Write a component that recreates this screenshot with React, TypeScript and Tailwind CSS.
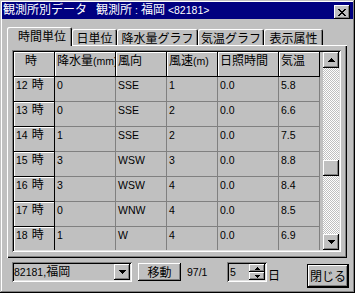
import React from "react";

const CJK_RE = /([\u3000-\u30ff\u3400-\u9fff\uff00-\uffef]+)/;

function T({ s }: { s: string }) {
  const parts = s.split(CJK_RE);
  return (
    <>
      {parts.map((p, i) =>
        i % 2 === 1 ? (
          <span key={i} className="font-['Noto_Sans_CJK_JP',sans-serif] text-[12px] leading-[10px]">
            {p}
          </span>
        ) : (
          <React.Fragment key={i}>{p}</React.Fragment>
        )
      )}
    </>
  );
}

const raised =
  "shadow-[inset_-1px_-1px_#000,inset_1px_1px_#fff,inset_-2px_-2px_#808080]";
const sunken =
  "shadow-[inset_1px_1px_#808080,inset_-1px_-1px_#fff,inset_2px_2px_#000,inset_-2px_-2px_#dfdfdf]";

function ArrowUp() {
  return (
    <svg width="7" height="4" viewBox="0 0 7 4" shapeRendering="crispEdges">
      <path d="M3 0h1v1H3zM2 1h3v1H2zM1 2h5v1H1zM0 3h7v1H0z" fill="#000" />
    </svg>
  );
}
function ArrowDown() {
  return (
    <svg width="7" height="4" viewBox="0 0 7 4" shapeRendering="crispEdges">
      <path d="M0 0h7v1H0zM1 1h5v1H1zM2 2h3v1H2zM3 3h1v1H3z" fill="#000" />
    </svg>
  );
}
function SmallUp() {
  return (
    <svg width="5" height="3" viewBox="0 0 5 3" shapeRendering="crispEdges">
      <path d="M2 0h1v1H2zM1 1h3v1H1zM0 2h5v1H0z" fill="#000" />
    </svg>
  );
}
function SmallDown() {
  return (
    <svg width="5" height="3" viewBox="0 0 5 3" shapeRendering="crispEdges">
      <path d="M0 0h5v1H0zM1 1h3v1H1zM2 2h1v1H2z" fill="#000" />
    </svg>
  );
}
function CloseX() {
  return (
    <svg width="8" height="7" viewBox="0 0 8 7" shapeRendering="crispEdges">
      <path
        d="M0 0h2v1H0zM6 0h2v1H6zM1 1h2v1H1zM5 1h2v1H5zM2 2h4v1H2zM3 3h2v1H3zM2 4h4v1H2zM1 5h2v1H1zM5 5h2v1H5zM0 6h2v1H0zM6 6h2v1H6z"
        fill="#000"
      />
    </svg>
  );
}

const colW = ["w-[41px]", "w-[61px]", "w-[51px]", "w-[51px]", "w-[61px]", "w-[41px]"];

const headers = ["時", "降水量(mm)", "風向", "風速(m)", "日照時間", "気温"];

const rows: string[][] = [
  ["12", "0", "SSE", "1", "0.0", "5.8"],
  ["13", "0", "SSE", "2", "0.0", "6.6"],
  ["14", "1", "SSE", "2", "0.0", "7.5"],
  ["15", "3", "WSW", "3", "0.0", "8.8"],
  ["16", "3", "WSW", "4", "0.0", "8.4"],
  ["17", "0", "WNW", "4", "0.0", "8.5"],
  ["18", "1", "W", "4", "0.0", "6.9"],
];

const tabs = [
  { label: "日単位", w: "w-[45px]" },
  { label: "降水量グラフ", w: "w-[81px]" },
  { label: "気温グラフ", w: "w-[66px]" },
  { label: "表示属性", w: "w-[59px]" },
];

export default function App() {
  return (
    <div className="w-[355px] h-[293px] bg-[#c0c0c0] p-[2px] flex flex-col overflow-hidden text-black font-['Liberation_Sans','Noto_Sans_CJK_JP',sans-serif] text-[10.5px] leading-[14px] shadow-[inset_-1px_-1px_#000,inset_1px_1px_#c0c0c0,inset_-2px_-2px_#808080,inset_2px_2px_#fff]">
      {/* Title bar */}
      <div className="h-[17px] shrink-0 bg-[#000080] flex items-start pl-[1px] text-white leading-[17px]">
        <span className="whitespace-nowrap">
          <T s="観測所別データ" />
          <span className="inline-block w-[9px]" />
          <T s="観測所" />
          <span className="mx-[3px]">:</span>
          <T s="福岡" /> &lt;82181&gt;
        </span>
        <div className={`ml-auto mr-[3px] mt-[3px] w-[16px] h-[14px] bg-[#c0c0c0] flex items-center justify-center ${raised}`}>
          <CloseX />
        </div>
      </div>

      {/* Tabs */}
      <div className="mt-[8px] h-[18px] shrink-0 flex items-end pl-[5px]">
        <div className="relative z-10 w-[65px] h-[19px] -mb-[1px] bg-[#c0c0c0] rounded-tl-[2px] rounded-tr-[2px] pt-[3px] pl-[11px] whitespace-nowrap shadow-[inset_1px_1px_#fff,inset_-1px_0_#000,inset_-2px_0_#808080]">
          <T s="時間単位" />
        </div>
        {tabs.map((t) => (
          <div
            key={t.label}
            className={`${t.w} h-[16px] bg-[#c0c0c0] rounded-tl-[2px] rounded-tr-[2px] pt-[3px] text-center whitespace-nowrap shadow-[inset_1px_1px_#fff,inset_-1px_0_#000,inset_-2px_0_#808080]`}
          >
            <T s={t.label} />
          </div>
        ))}
      </div>

      {/* Panel */}
      <div className="ml-[5px] w-[340px] h-[213px] shrink-0 pt-[5px] pl-[5px] shadow-[inset_1px_1px_#fff,inset_-1px_-1px_#000,inset_-2px_-2px_#808080]">
        <div className={`w-[329px] h-[202px] p-[2px] flex overflow-hidden ${sunken}`}>
          {/* Grid */}
          <div className="w-[306px] h-full flex flex-col overflow-hidden">
            <div className="h-[25px] shrink-0 flex">
              {headers.map((h, ci) => (
                <div
                  key={h}
                  className={`${colW[ci]} shrink-0 h-full border-r border-b border-black shadow-[inset_1px_1px_#fff] pt-[2px] overflow-hidden whitespace-nowrap ${
                    ci === 0 ? "pl-[11px]" : "pl-[2px]"
                  }`}
                >
                  <T s={h} />
                </div>
              ))}
            </div>
            {rows.map((r) => (
              <div key={r[0]} className="h-[25px] shrink-0 flex">
                {r.map((c, ci) =>
                  ci === 0 ? (
                    <div
                      key={ci}
                      className="w-[41px] shrink-0 h-full border-r border-b border-black shadow-[inset_1px_1px_#fff] pt-[1px] pl-[2px] whitespace-nowrap"
                    >
                      {c}
                      <span className="inline-block w-[4px]" />
                      <T s="時" />
                    </div>
                  ) : (
                    <div
                      key={ci}
                      className={`${colW[ci]} shrink-0 h-full border-r border-b border-[#808080] pt-[1px] pl-[2px] overflow-hidden whitespace-nowrap`}
                    >
                      {c}
                    </div>
                  )
                )}
              </div>
            ))}
          </div>
          {/* Scrollbar */}
          <div className="ml-[3px] w-[16px] h-full flex flex-col">
            <div className={`h-[16px] shrink-0 flex items-center justify-center ${raised}`}>
              <ArrowUp />
            </div>
            <div className="flex-1 flex flex-col [background:repeating-conic-gradient(#c0c0c0_0_25%,#fff_0_50%)_0_0/2px_2px]">
              <div className={`mt-[92px] h-[16px] bg-[#c0c0c0] ${raised}`} />
            </div>
            <div className={`h-[16px] shrink-0 flex items-center justify-center ${raised}`}>
              <ArrowDown />
            </div>
          </div>
        </div>
      </div>

      {/* Bottom controls */}
      <div className="mt-[4px] flex items-start pl-[10px]">
        <div className={`w-[120px] h-[20px] p-[2px] flex ${sunken}`}>
          <div className="flex-1 pt-[1px] whitespace-nowrap">
            <T s="82181,福岡" />
          </div>
          <div className={`w-[16px] h-[16px] flex items-center justify-center ${raised}`}>
            <ArrowDown />
          </div>
        </div>
        <div className={`ml-[6px] mt-[1px] w-[43px] h-[18px] flex items-center justify-center ${raised}`}>
          <T s="移動" />
        </div>
        <div className="ml-[6px] w-[40px] pt-[3px]">97/1</div>
        <div className={`w-[40px] h-[20px] p-[2px] flex ${sunken}`}>
          <div className="flex-1 pt-[1px] pl-[1px]">5</div>
          <div className="w-[16px] flex flex-col">
            <div className={`h-[8px] flex items-center justify-center ${raised}`}>
              <SmallUp />
            </div>
            <div className={`h-[8px] flex items-center justify-center ${raised}`}>
              <SmallDown />
            </div>
          </div>
        </div>
        <div className="ml-[1px] pt-[7px]">
          <T s="日" />
        </div>
        <div className="ml-auto mr-[4px] mt-[2px] w-[42px] h-[24px] border border-black">
          <div className={`w-full h-full flex items-center justify-center ${raised}`}>
            <T s="閉じる" />
          </div>
        </div>
      </div>
    </div>
  );
}
